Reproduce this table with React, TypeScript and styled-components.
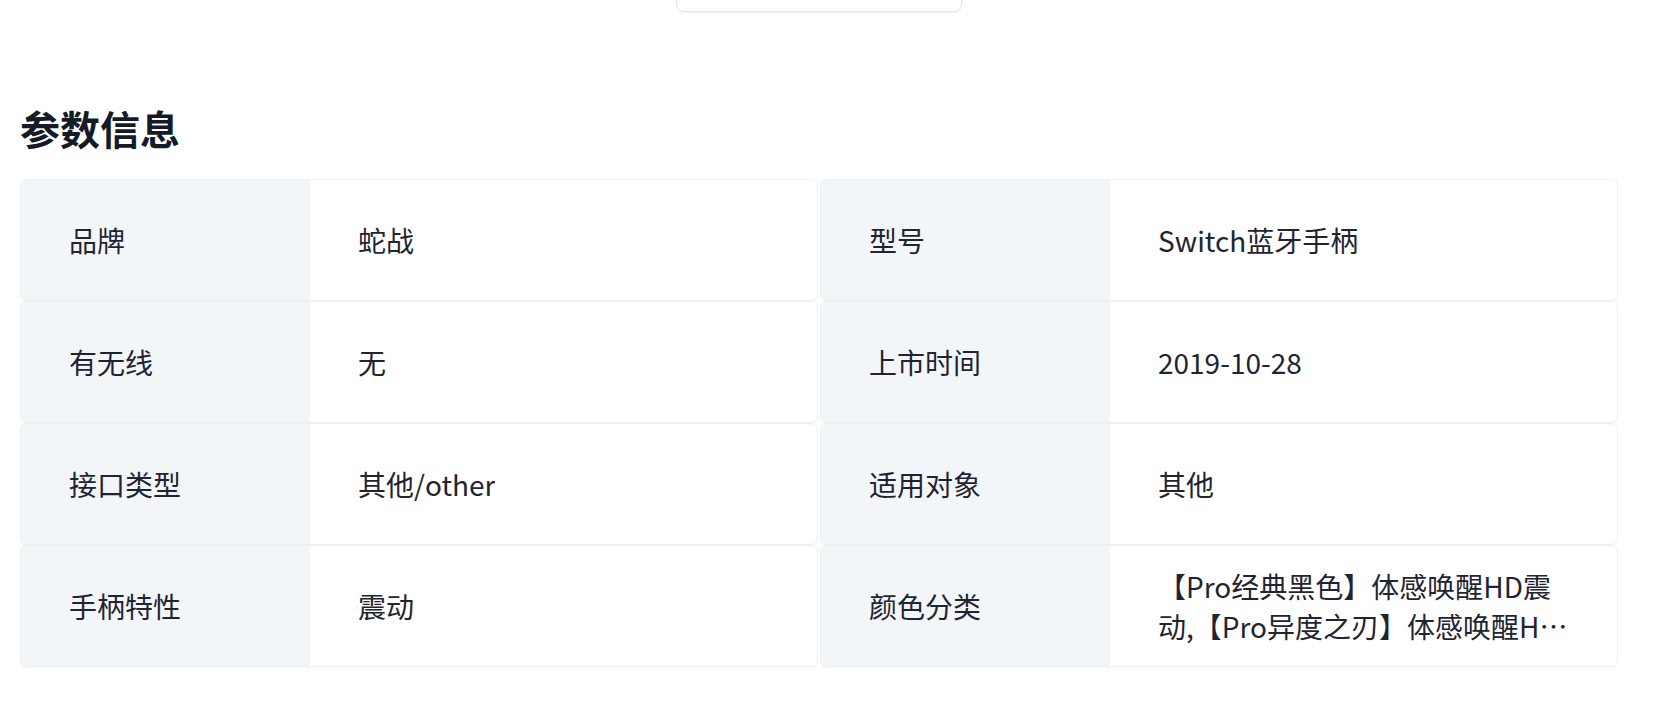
import styled, { createGlobalStyle } from "styled-components";

const GlobalStyle = createGlobalStyle`
  html, body {
    margin: 0;
    padding: 0;
    background: #ffffff;
  }
  body {
    font-family: "Noto Sans CJK SC", "Noto Sans", sans-serif;
    color: #1f2430;
  }
`;

const Page = styled.div`
  width: 1598px;
  padding-left: 20px;
  overflow: hidden;
  height: 715px;
`;

const MoreButton = styled.div`
  width: 284px;
  height: 48px;
  margin: -38px auto 0;
  border: 1px solid #e3e4e6;
  border-radius: 8px;
  box-shadow: 0 1px 2px rgba(0, 0, 0, 0.06);
  background: #fff;
`;

const Title = styled.h2`
  margin: 88px 0 23px;
  font-size: 40px;
  line-height: 56px;
  font-weight: 700;
  color: #141a26;
`;

const SpecGrid = styled.div`
  display: grid;
  grid-template-columns: 1fr 1fr;
  column-gap: 2px;
  row-gap: 0;
`;

const SpecItem = styled.div`
  display: grid;
  grid-template-columns: 289px 1fr;
  min-height: 120px;
  border: 1px solid #eff0f2;
  border-radius: 6px;
  overflow: hidden;
  box-shadow: 0 1px 2px rgba(0, 0, 0, 0.03);
`;

const Label = styled.div`
  display: flex;
  align-items: center;
  padding: 0 48px;
  background: #f3f6f9;
  font-size: 28px;
  color: #1f2430;
`;

const Value = styled.div`
  display: flex;
  align-items: center;
  padding: 0 48px;
  font-size: 28px;
  line-height: 40px;
  color: #1f2430;

  span {
    display: -webkit-box;
    -webkit-line-clamp: 2;
    -webkit-box-orient: vertical;
    overflow: hidden;
  }
`;

const specs = [
  { label: "品牌", value: "蛇战" },
  { label: "型号", value: "Switch蓝牙手柄" },
  { label: "有无线", value: "无" },
  { label: "上市时间", value: "2019-10-28" },
  { label: "接口类型", value: "其他/other" },
  { label: "适用对象", value: "其他" },
  { label: "手柄特性", value: "震动" },
  {
    label: "颜色分类",
    value:
      "【Pro经典黑色】体感唤醒HD震动,【Pro异度之刃】体感唤醒HD震动,【Pro塞尔达】体感唤醒HD震动",
  },
];

export default function App() {
  return (
    <>
      <GlobalStyle />
      <Page>
        <MoreButton />
        <Title>参数信息</Title>
        <SpecGrid>
          {specs.map((s) => (
            <SpecItem key={s.label}>
              <Label>{s.label}</Label>
              <Value>
                <span>{s.value}</span>
              </Value>
            </SpecItem>
          ))}
        </SpecGrid>
      </Page>
    </>
  );
}
